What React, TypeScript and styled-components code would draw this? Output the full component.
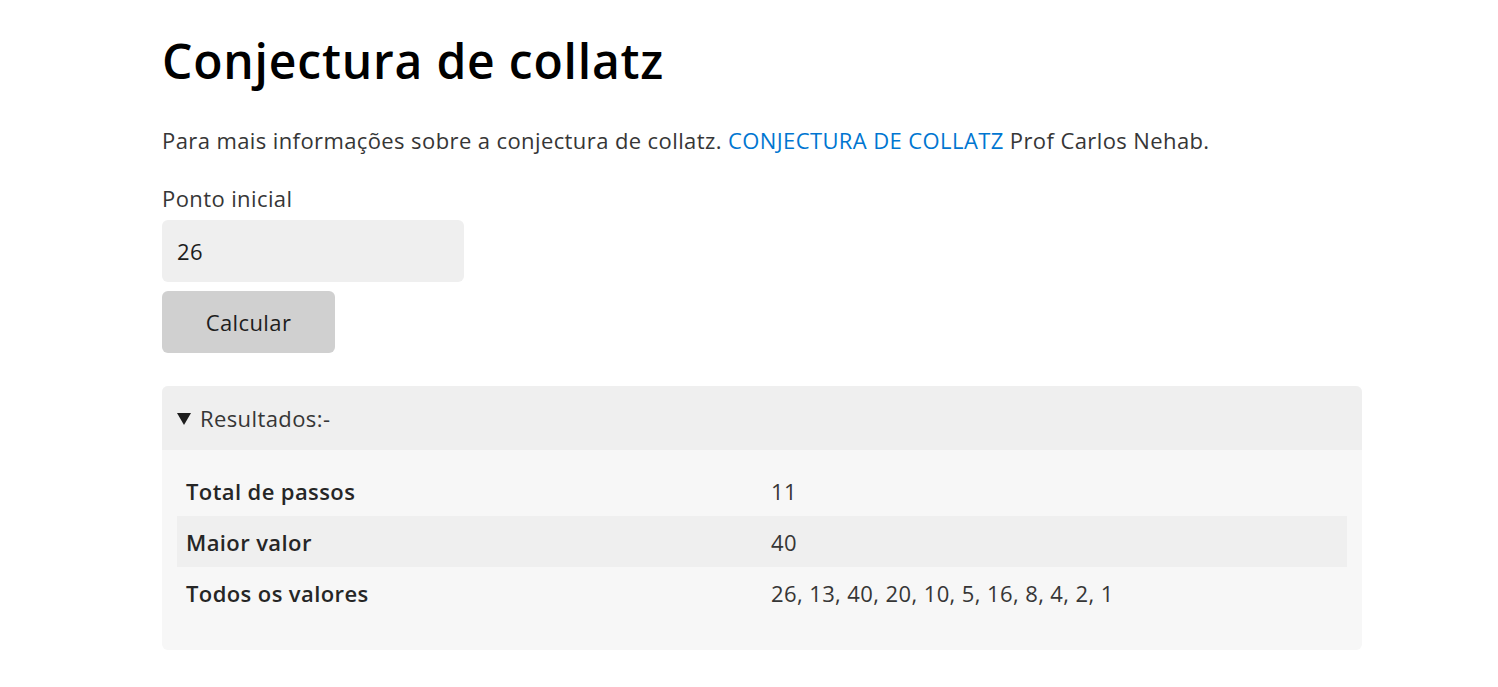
import React from "react";
import styled, { createGlobalStyle } from "styled-components";

const Global = createGlobalStyle`
  html, body { margin: 0; padding: 0; background: #ffffff; }
  body {
    font-family: "Open Sans", "Noto Sans", sans-serif;
    color: #363636;
    font-size: 22px;
    line-height: 30px;
    letter-spacing: 0.4px;
  }
`;

const Page = styled.main`
  width: 1200px;
  margin-left: 162px;
  padding-top: 32px;
  padding-bottom: 37px;
`;

const Title = styled.h1`
  margin: 0;
  font-size: 48px;
  font-weight: 600;
  line-height: 58px;
  color: #000000;
  letter-spacing: 0.8px;
`;

const Intro = styled.p`
  margin: 35px 0 28px 0;
  line-height: 30px;
`;

const Link = styled.a`
  color: #0076d1;
  text-decoration: none;
`;

const Form = styled.div`
  display: flex;
  flex-direction: column;
  align-items: flex-start;
  gap: 9px;
`;

const Label = styled.label`
  display: block;
  line-height: 30px;
  margin-bottom: -2px;
`;

const Input = styled.input`
  box-sizing: border-box;
  width: 302px;
  height: 62px;
  padding: 0 15px;
  border: none;
  border-radius: 6px;
  background: #efefef;
  color: #1d1d1d;
  font-family: inherit;
  font-size: 22px;
  letter-spacing: 0.4px;
  outline: none;
`;

const Button = styled.button`
  box-sizing: border-box;
  width: 173px;
  height: 62px;
  border: none;
  border-radius: 6px;
  background: #d0d0d0;
  color: #1d1d1d;
  font-family: inherit;
  font-size: 22px;
  letter-spacing: 0.4px;
  cursor: pointer;
`;

const Details = styled.details`
  margin-top: 33px;
  border-radius: 6px;
  background: #f7f7f7;
  overflow: hidden;
  padding: 0 15px 32px 15px;
`;

const Summary = styled.summary`
  display: flex;
  align-items: center;
  gap: 9px;
  height: 64px;
  margin: 0 -15px 15px -15px;
  padding: 0 15px;
  background: #efefef;
  list-style: none;
  cursor: pointer;
  &::-webkit-details-marker { display: none; }
`;

const Arrow = styled.span`
  display: block;
  width: 0;
  height: 0;
  border-left: 7px solid transparent;
  border-right: 7px solid transparent;
  border-top: 12px solid #1d1d1d;
  margin-top: 1px;
`;

const Table = styled.table`
  width: 100%;
  border-collapse: collapse;
  table-layout: fixed;
`;

const Row = styled.tr<{ $alt?: boolean }>`
  background: ${(p) => (p.$alt ? "#efefef" : "transparent")};
`;

const Th = styled.th`
  text-align: left;
  font-weight: 600;
  height: 51px;
  padding: 0 9px;
  color: #262626;
`;

const Td = styled.td`
  height: 51px;
  padding: 0 9px;
`;

export default function App() {
  const rows = [
    ["Total de passos", "11"],
    ["Maior valor", "40"],
    ["Todos os valores", "26, 13, 40, 20, 10, 5, 16, 8, 4, 2, 1"],
  ];
  return (
    <>
      <Global />
      <Page>
        <Title>Conjectura de collatz</Title>
        <Intro>
          Para mais informações sobre a conjectura de collatz.{" "}
          <Link href="#">CONJECTURA DE COLLATZ</Link> Prof Carlos Nehab.
        </Intro>
        <Form>
          <Label htmlFor="start">Ponto inicial</Label>
          <Input id="start" defaultValue="26" />
          <Button>Calcular</Button>
        </Form>
        <Details open>
          <Summary>
            <Arrow />
            Resultados:-
          </Summary>
          <Table>
            <tbody>
              {rows.map((r, i) => (
                <Row key={r[0]} $alt={i === 1}>
                  <Th>{r[0]}</Th>
                  <Td>{r[1]}</Td>
                </Row>
              ))}
            </tbody>
          </Table>
        </Details>
      </Page>
    </>
  );
}
